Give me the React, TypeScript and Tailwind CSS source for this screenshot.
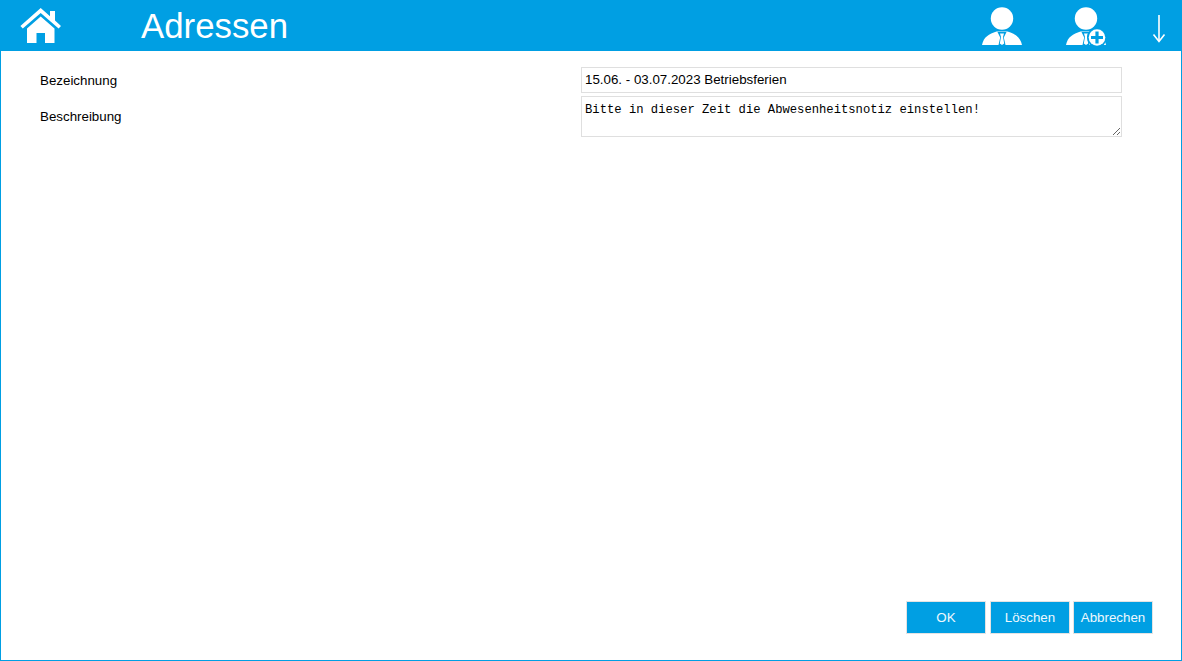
const sans = 'font-["Liberation_Sans",Arial,sans-serif]'

function HomeIcon() {
  return (
    <svg width="42" height="40" viewBox="0 0 42 40" fill="white">
      <path d="M20.7 1 L30 9.2 V4 H35 V13.6 L41 19 L38.6 21.6 L20.7 6 L2.8 21.6 L0.4 19 Z" />
      <path d="M20.7 9.5 L34.5 21.5 V36 H25 V26 H16.5 V36 H7 V21.5 Z" />
    </svg>
  )
}

function PersonIcon({ plus = false }: { plus?: boolean }) {
  return (
    <svg width="42" height="40" viewBox="0 0 42 40" fill="white">
      <circle cx="20" cy="11.5" r="11.2" />
      <path d="M0 38 C1.5 30 7 27 14.5 24.5 H25.5 C33 27 38.5 30 40 38 Z" />
      {/* tie */}
      <path d="M15.5 25 L18.2 30.5 L16.5 38 H23.5 L21.8 30.5 L24.5 25 Z" fill="#009fe3" />
      <path d="M18 26.5 H22 L21 30 L22.2 36.5 L20 38 L17.8 36.5 L19 30 Z" />
      {plus && (
        <g>
          <circle cx="31" cy="30.5" r="10" fill="#009fe3" />
          <circle cx="31" cy="30.5" r="8.3" />
          <path d="M31 24.5 V36.5 M25 30.5 H37" stroke="#009fe3" strokeWidth="3.2" />
        </g>
      )}
    </svg>
  )
}

function ArrowIcon() {
  return (
    <svg width="14" height="28" viewBox="0 0 14 28" fill="none" stroke="white" strokeWidth="1.6">
      <path d="M7 0 V26" />
      <path d="M1.5 19.5 L7 26.5 L12.5 19.5" />
    </svg>
  )
}

function ActionButton({ label, className = '' }: { label: string; className?: string }) {
  return (
    <button className={`w-[80px] h-[33px] bg-[#009fe3] border border-[#e3e3e3] text-[13.33px] text-[#eef8fd] ${className}`}>
      {label}
    </button>
  )
}

export default function App() {
  return (
    <div className={`${sans} w-[1182px] h-[661px] flex flex-col bg-white border-x border-b border-[#009fe3] text-black overflow-hidden`}>
      {/* Header */}
      <header className="h-[51px] shrink-0 bg-[#009fe3] flex items-start -mx-px text-white">
        <div className="ml-[20px] mt-[7px]">
          <HomeIcon />
        </div>
        <h1 className="ml-[79px] mt-[6px] text-[34.8px] leading-[40px] font-normal">Adressen</h1>
        <div className="ml-auto mt-[7px]">
          <PersonIcon />
        </div>
        <div className="ml-[42px] mt-[7px]">
          <PersonIcon plus />
        </div>
        <div className="ml-[44px] mr-[16px] mt-[15px]">
          <ArrowIcon />
        </div>
      </header>

      {/* Form */}
      <main className="flex-1 flex flex-col pl-[39px] pr-[59px] pt-[16px]">
        <div className="flex items-center">
          <label className="w-[541px] text-[13.33px] mt-[2px]">Bezeichnung</label>
          <input
            className="w-[541px] h-[26px] border border-[#dfdfdf] px-[3px] pb-[2px] text-[13.33px] outline-none"
            defaultValue="15.06. - 03.07.2023 Betriebsferien"
          />
        </div>
        <div className="flex items-start mt-[3px]">
          <label className="w-[541px] text-[13.33px] mt-[11px]">Beschreibung</label>
          <textarea
            className='w-[541px] h-[41px] border border-[#dfdfdf] px-[3px] pt-[6px] pb-[3px] text-[12.2px] leading-[14px] font-["Liberation_Mono",monospace] outline-none resize-y'
            defaultValue="Bitte in dieser Zeit die Abwesenheitsnotiz einstellen!"
          />
        </div>

        {/* Actions */}
        <div className="mt-auto mb-[26px] -mr-[31px] flex justify-end">
          <ActionButton label="OK" />
          <ActionButton label="Löschen" className="ml-[4px]" />
          <ActionButton label="Abbrechen" className="ml-[3px]" />
        </div>
      </main>
    </div>
  )
}
